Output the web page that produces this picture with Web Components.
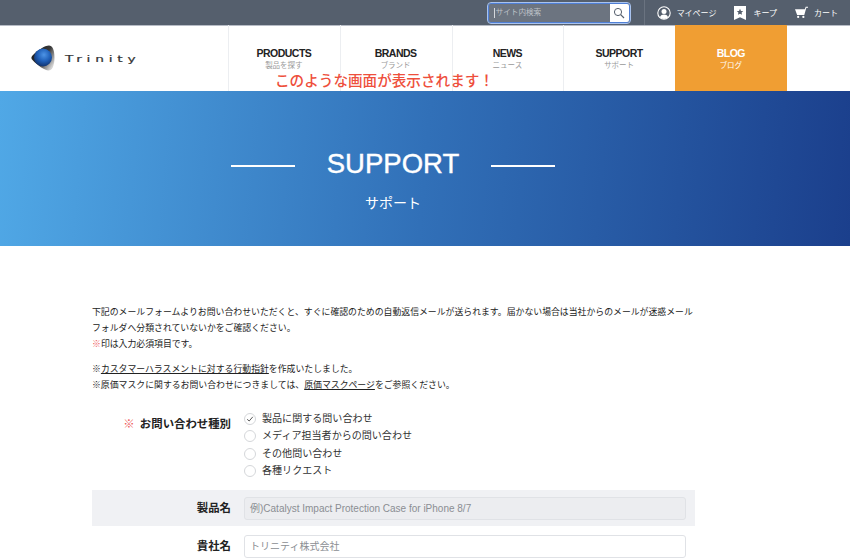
<!DOCTYPE html>
<html lang="ja">
<head>
<meta charset="utf-8">
<title>SUPPORT</title>
<style>
    html, body {
        margin: 0;
        height: 558px;
        overflow: hidden;
        background: #fff;
        font-family: "Liberation Sans", "Noto Sans CJK JP", sans-serif;
        color: #222;
    }
</style>
</head>
<body>
<site-topbar></site-topbar>
<site-nav></site-nav>
<hero-banner title="SUPPORT" sub="サポート"></hero-banner>
<contact-page></contact-page>

<script>
const FONT = `"Liberation Sans", "Noto Sans CJK JP", sans-serif`;

class SiteTopbar extends HTMLElement {
    #template = `
        <style>
            :host {
                display: flex;
                justify-content: flex-end;
                align-items: center;
                height: 25px;
                background: #555f6d;
                color: #fff;
                font-family: ${FONT};
                font-size: 8px;
            }

            .search {
                display: flex;
                width: 142px;
                height: 20px;
                margin-right: 14px;
                border: 1px solid #4f7fd6;
                outline: 1px solid #a9c3ee;
                border-radius: 3px;
                background: #6c7480;
                overflow: hidden;
                box-sizing: border-box;
            }

            .search span {
                flex-grow: 1;
                margin-left: 5px;
                padding-left: 1px;
                height: 10px;
                margin-top: 4px;
                border-left: 1px solid #d5d8dd;
                line-height: 10px;
                font-size: 7.6px;
                color: #bfc3c9;
            }

            .search button {
                display: flex;
                align-items: center;
                justify-content: center;
                width: 19px;
                padding: 0;
                border: 0;
                background: #fff;
            }

            .links {
                display: flex;
                align-items: center;
                height: 25px;
                padding-left: 12px;
                border-left: 1px solid #6a7380;
            }

            .link {
                display: flex;
                align-items: center;
                gap: 6px;
                margin-right: 18px;
            }

            .link:last-child {
                margin-right: 12px;
            }
        </style>

        <div class="search">
            <span>サイト内検索</span>
            <button aria-label="検索">
                <svg width="12" height="12" viewBox="0 0 12 12" fill="none" stroke="#555f6d" stroke-width="1">
                    <circle cx="5" cy="5" r="3.6"/>
                    <path d="M7.7 7.7 11 11" stroke-width="1.2"/>
                </svg>
            </button>
        </div>
        <div class="links">
            <div class="link">
                <svg width="14" height="14" viewBox="0 0 14 14">
                    <circle cx="7" cy="7" r="6.2" fill="none" stroke="#fff" stroke-width="1.1"/>
                    <circle cx="7" cy="5.4" r="2.5" fill="#fff"/>
                    <path d="M2.9 11.2C3.6 9 5.2 8.4 7 8.4s3.4.6 4.1 2.8A5.6 5.6 0 0 1 7 13a5.6 5.6 0 0 1-4.1-1.8z" fill="#fff"/>
                </svg>
                <span>マイページ</span>
            </div>
            <div class="link" style="gap: 7px">
                <svg width="12" height="14" viewBox="0 0 12 14">
                    <path d="M0 0h12v14L6 11.200 0 14z" fill="#fff"/>
                    <path d="M6 2.800l1 2.100 2.200.2-1.600 1.500.4 2.200L6 7.700 4 8.800l.4-2.200-1.600-1.500 2.200-.2z" fill="#555f6d"/>
                </svg>
                <span>キープ</span>
            </div>
            <div class="link" style="gap: 6px">
                <svg width="13" height="13" viewBox="0 0 14 13" fill="#fff">
                    <path d="M0 3h10.600l.9-2.600h2.500v.9h-1.800L10 9.300H2.300z"/>
                    <circle cx="3.400" cy="11.300" r="1.200"/>
                    <circle cx="9" cy="11.300" r="1.200"/>
                </svg>
                <span>カート</span>
            </div>
        </div>
    `;

    constructor() {
        super();
        this.attachShadow({ mode: 'open' }).innerHTML = this.#template;
    }
}

class NavItem extends HTMLElement {
    #template = `
        <style>
            :host {
                display: flex;
                flex-direction: column;
                align-items: center;
                box-sizing: border-box;
                width: 111.75px;
                padding: 22px 1px 0 0;
                border-left: 1px solid #eceef1;
                color: #222;
                font-family: ${FONT};
            }

            :host([active]) {
                background: #f09e33;
                color: #fff;
                border-left-color: #f09e33;
            }

            .en {
                font-size: 10.5px;
                font-weight: bold;
                line-height: 13px;
                letter-spacing: -0.5px;
            }

            .ja {
                font-size: 7.5px;
                line-height: 11px;
                margin-top: 0;
                color: #999;
            }

            :host([active]) .ja {
                color: #fff;
            }
        </style>

        <span class="en"></span>
        <span class="ja"></span>
    `;

    constructor() {
        super();
        this.attachShadow({ mode: 'open' }).innerHTML = this.#template;
    }

    connectedCallback() {
        this.shadowRoot.querySelector('.en').textContent = this.getAttribute('en');
        this.shadowRoot.querySelector('.ja').textContent = this.getAttribute('ja');
    }
}

class SiteNav extends HTMLElement {
    #template = `
        <style>
            :host {
                display: flex;
                position: relative;
                height: 66px;
                background: #fff;
                box-shadow: inset 0 1px 0 #b7bcc6;
                font-family: ${FONT};
            }

            .logo {
                display: flex;
                align-items: center;
                gap: 10px;
                box-sizing: border-box;
                width: 228px;
                padding-left: 31px;
            }

            .logo span {
                font-family: "DejaVu Sans", sans-serif;
                font-size: 9.5px;
                letter-spacing: 3.3px;
                color: #333;
                margin-top: 1px;
                transform: scaleX(1.45);
                transform-origin: left center;
                -webkit-text-stroke: 0.2px #333;
            }

            .notice {
                position: absolute;
                left: 275px;
                top: 46px;
                font-size: 14.6px;
                font-weight: 500;
                line-height: 20px;
                color: #ee4f3c;
                white-space: nowrap;
            }
        </style>

        <div class="logo">
            <svg width="24" height="26" viewBox="0 0 24 26">
                <defs>
                    <radialGradient id="ball" cx="55%" cy="35%" r="65%">
                        <stop offset="0" stop-color="#4d94e6"/>
                        <stop offset="0.55" stop-color="#1f5fb8"/>
                        <stop offset="1" stop-color="#10336f"/>
                    </radialGradient>
                    <linearGradient id="rim" x1="0" y1="0" x2="1" y2="0.7">
                        <stop offset="0" stop-color="#111"/>
                        <stop offset="0.6" stop-color="#3a3a3a"/>
                        <stop offset="1" stop-color="#d4d4d4"/>
                    </linearGradient>
                </defs>
                <path d="M18 .5C21 .5 23.500 4 23.500 12.500 23.500 21 21 25.500 17.500 25.500 14 25.500 6 20 1.500 15 0 13.500 0 12 1.500 10.500 6 5.500 14 .5 18 .5z" fill="url(#rim)"/>
                <circle cx="12" cy="12.500" r="9" fill="url(#ball)"/>
            </svg>
            <span>Trinity</span>
        </div>
        <nav-item en="PRODUCTS" ja="製品を探す"></nav-item>
        <nav-item en="BRANDS" ja="ブランド"></nav-item>
        <nav-item en="NEWS" ja="ニュース"></nav-item>
        <nav-item en="SUPPORT" ja="サポート"></nav-item>
        <nav-item en="BLOG" ja="ブログ" active></nav-item>
        <div class="notice">このような画面が表示されます！</div>
    `;

    constructor() {
        super();
        this.attachShadow({ mode: 'open' }).innerHTML = this.#template;
    }
}

class HeroBanner extends HTMLElement {
    #template = `
        <style>
            :host {
                display: flex;
                flex-direction: column;
                align-items: center;
                box-sizing: border-box;
                height: 155px;
                padding: 55px 64px 0 0;
                background: linear-gradient(95deg, #50a8e6 0%, #3170b8 50%, #1b3f8c 100%);
                color: #fff;
                font-family: ${FONT};
            }

            .title {
                display: flex;
                align-items: center;
                gap: 32px;
                font-size: 27.5px;
                font-weight: 500;
                line-height: 36px;
                -webkit-text-stroke: 0.4px #fff;
            }

            .title::before,
            .title::after {
                content: '';
                width: 64px;
                height: 2px;
                margin-top: 4px;
                background: #fff;
            }

            .sub {
                margin-top: 11px;
                font-size: 14px;
                line-height: 20px;
            }
        </style>

        <div class="title"></div>
        <div class="sub"></div>
    `;

    constructor() {
        super();
        this.attachShadow({ mode: 'open' }).innerHTML = this.#template;
    }

    connectedCallback() {
        this.shadowRoot.querySelector('.title').textContent = this.getAttribute('title');
        this.shadowRoot.querySelector('.sub').textContent = this.getAttribute('sub');
    }
}

class RadioOption extends HTMLElement {
    #template = `
        <style>
            :host {
                display: flex;
                align-items: center;
                gap: 6px;
                height: 17.500px;
                font-size: 10.05px;
                color: #333;
            }

            .mark {
                display: flex;
                align-items: center;
                justify-content: center;
                box-sizing: border-box;
                width: 12px;
                height: 12px;
                border: 1px solid #d5d7da;
                border-radius: 50%;
                background: #fff;
            }

            svg {
                display: none;
            }

            :host([checked]) svg {
                display: block;
            }
        </style>

        <span class="mark">
            <svg width="8" height="8" viewBox="0 0 8 8" fill="none" stroke="#444" stroke-width="0.9">
                <path d="M1.200 4.300 3.200 6 6.800 1.800"/>
            </svg>
        </span>
        <slot></slot>
    `;

    constructor() {
        super();
        this.attachShadow({ mode: 'open' }).innerHTML = this.#template;
    }
}

class FormRow extends HTMLElement {
    #template = `
        <style>
            :host {
                display: flex;
                align-items: center;
                height: 36px;
            }

            :host([shaded]) {
                background: #f0f1f4;
            }

            label {
                box-sizing: border-box;
                width: 139px;
                text-align: right;
                font-size: 11.4px;
                font-weight: bold;
                color: #222;
            }

            .field {
                box-sizing: border-box;
                width: 442px;
                height: 23px;
                margin-left: 13px;
                padding-left: 5px;
                border: 1px solid #e0e2e6;
                border-radius: 3px;
                background: #fff;
                color: #8b8e93;
                font-size: 10px;
                line-height: 21px;
            }

            :host([shaded]) .field {
                background: #ecedf0;
            }
        </style>

        <label></label>
        <div class="field"></div>
    `;

    constructor() {
        super();
        this.attachShadow({ mode: 'open' }).innerHTML = this.#template;
    }

    connectedCallback() {
        this.shadowRoot.querySelector('label').textContent = this.getAttribute('label');
        this.shadowRoot.querySelector('.field').textContent = this.getAttribute('placeholder');
    }
}

class ContactPage extends HTMLElement {
    #template = `
        <style>
            :host {
                display: block;
                width: 603px;
                margin-left: 92px;
                padding-top: 58px;
                font-family: ${FONT};
                font-size: 8.87px;
                line-height: 16px;
                color: #222;
            }

            p {
                margin: 0 0 9px;
                white-space: nowrap;
            }

            a {
                color: inherit;
                text-decoration: underline;
            }

            .req {
                color: #ee5a5a;
            }

            .kind {
                display: flex;
                margin: 16px 0 10px;
            }

            .kind .head {
                box-sizing: border-box;
                width: 139px;
                padding-top: 6px;
                text-align: right;
                font-size: 11.4px;
                font-weight: bold;
                line-height: 18px;
            }

            .kind .head .req {
                margin-right: 2px;
            }

            .kind .opts {
                margin: 1px 0 0 13px;
            }

            form-row + form-row {
                margin-top: 2px;
            }
        </style>

        <p>下記のメールフォームよりお問い合わせいただくと、すぐに確認のための自動返信メールが送られます。届かない場合は当社からのメールが迷惑メール<br>
        フォルダへ分類されていないかをご確認ください。<br>
        <span class="req">※</span>印は入力必須項目です。</p>
        <p>※<a>カスタマーハラスメントに対する行動指針</a>を作成いたしました。<br>
        ※原価マスクに関するお問い合わせにつきましては、<a>原価マスクページ</a>をご参照ください。</p>

        <div class="kind">
            <div class="head"><span class="req">※</span> お問い合わせ種別</div>
            <div class="opts">
                <radio-option checked>製品に関する問い合わせ</radio-option>
                <radio-option>メディア担当者からの問い合わせ</radio-option>
                <radio-option>その他問い合わせ</radio-option>
                <radio-option>各種リクエスト</radio-option>
            </div>
        </div>

        <form-row shaded label="製品名" placeholder="例)Catalyst Impact Protection Case for iPhone 8/7"></form-row>
        <form-row label="貴社名" placeholder="トリニティ株式会社"></form-row>
    `;

    constructor() {
        super();
        this.attachShadow({ mode: 'open' }).innerHTML = this.#template;
    }
}

window.customElements.define('site-topbar', SiteTopbar);
window.customElements.define('nav-item', NavItem);
window.customElements.define('site-nav', SiteNav);
window.customElements.define('hero-banner', HeroBanner);
window.customElements.define('radio-option', RadioOption);
window.customElements.define('form-row', FormRow);
window.customElements.define('contact-page', ContactPage);
</script>
</body>
</html>
